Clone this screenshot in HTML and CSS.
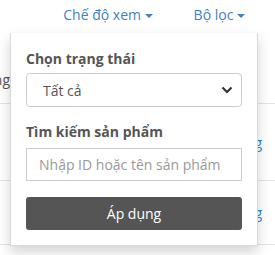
FILE: index.html
```html
<!DOCTYPE html>
<html lang="vi">
<head>
<meta charset="utf-8">
<link rel="stylesheet" href="styles.css">
</head>
<body>
<div class="page">
  <div class="toolbar">
    <a class="link" href="#">Chế độ xem <span class="caret"></span></a>
    <a class="link" href="#">Bộ lọc <span class="caret"></span></a>
  </div>
  <div class="table">
    <div class="row head"></div>
    <div class="row r1"><div class="cell-left"><span>Đang hoạt động</span></div></div>
    <div class="row r2"><div class="cell-right"><a href="#">Xóa hàng</a></div></div>
    <div class="row r3"><div class="cell-right"><a href="#">Xóa hàng</a></div></div>
  </div>

  <div class="panel">
    <label class="label">Chọn trạng thái</label>
    <div class="select-wrap">
      <select class="select">
        <option>Tất cả</option>
      </select>
    </div>
    <label class="label label2">Tìm kiếm sản phẩm</label>
    <input class="input" type="text" placeholder="Nhập ID hoặc tên sản phẩm">
    <button class="btn">Áp dụng</button>
  </div>
</div>
</body>
</html>
```

FILE: styles.css
```css
html, body {
  margin: 0;
  padding: 0;
  background: #fff;
}
body {
  font-family: "Open Sans", "Noto Sans", sans-serif;
  font-size: 14px;
  color: #555;
}
.page {
  position: relative;
  width: 275px;
  height: 255px;
  overflow: hidden;
}
.toolbar {
  display: flex;
  justify-content: flex-end;
  gap: 41px;
  padding: 5px 30px 0 0;
  height: 28px;
  box-sizing: border-box;
}
.link {
  color: #3f7fc3;
  text-decoration: none;
  font-size: 14px;
  line-height: 20px;
  white-space: nowrap;
}
.caret {
  display: inline-block;
  width: 0;
  height: 0;
  border-left: 4px solid transparent;
  border-right: 4px solid transparent;
  border-top: 4px solid #3f7fc3;
  vertical-align: middle;
  margin-left: 0;
}
.table {
  display: flex;
  flex-direction: column;
}
.row {
  border-bottom: 1px solid #e3e3e3;
  display: flex;
  align-items: center;
  box-sizing: border-box;
}
.head { height: 28px; border-bottom: none; }
.r1 { height: 48px; }
.r2 { height: 77px; }
.r3 { height: 64px; }
.cell-left {
  width: 10px;
  display: flex;
  justify-content: flex-end;
  white-space: nowrap;
  color: #555;
}
.cell-right {
  margin-left: auto;
  margin-right: 13px;
  width: 0;
  display: flex;
  justify-content: flex-end;
  white-space: nowrap;
}
.cell-right a {
  color: #1a8ad6;
  text-decoration: none;
  flex: none;
}
.panel {
  position: absolute;
  left: 10px;
  top: 33px;
  width: 248px;
  box-sizing: border-box;
  padding: 15px 15px 15px 15px;
  background: #fff;
  border: 1px solid rgba(0,0,0,0.15);
  border-top: none;
  box-shadow: 0 6px 12px rgba(0,0,0,0.175);
  display: flex;
  flex-direction: column;
  height: 213px;
}
.label {
  font-weight: 700;
  font-size: 14px;
  line-height: 20px;
  color: #555;
  margin: 1px 0 4px 0;
}
.label2 { margin-top: 15px; margin-bottom: 6px; }
.select {
  -webkit-appearance: none;
  appearance: none;
  width: 100%;
  height: 34px;
  border: 1px solid #ccc;
  border-radius: 4px;
  padding: 0 30px 0 16px;
  font-family: "Open Sans", "Noto Sans", sans-serif;
  font-size: 14px;
  color: #555;
  background: #fff url("data:image/svg+xml;utf8,<svg xmlns='http://www.w3.org/2000/svg' width='12' height='8' viewBox='0 0 12 8'><path d='M1.5 1.5 L6 6 L10.5 1.5' fill='none' stroke='%23333' stroke-width='2.2'/></svg>") no-repeat right 8px center;
  box-sizing: border-box;
}
.input {
  width: 100%;
  height: 34px;
  border: 1px solid #ccc;
  border-radius: 0;
  padding: 0 12px;
  font-family: "Open Sans", "Noto Sans", sans-serif;
  font-size: 14px;
  color: #555;
  box-sizing: border-box;
}
.input::placeholder { color: #999; }
.btn {
  margin-top: 16px;
  width: 100%;
  height: 34px;
  background: #555;
  color: #fff;
  border: none;
  border-radius: 3px;
  font-family: "Open Sans", "Noto Sans", sans-serif;
  font-size: 14px;
}
```
